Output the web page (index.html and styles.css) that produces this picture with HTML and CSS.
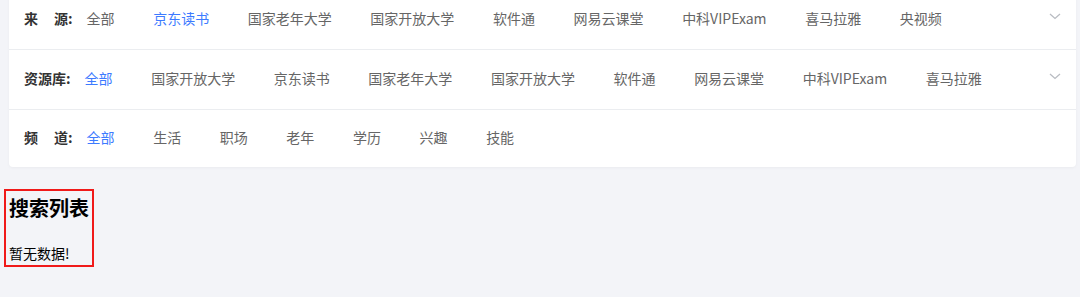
FILE: index.html
```html
<!DOCTYPE html>
<html lang="zh-CN">
<head>
    <meta charset="UTF-8" />
    <meta name="viewport" content="width=device-width, initial-scale=1.0" />
    <title>搜索列表</title>
    <link rel="stylesheet" href="styles.css">
</head>
<body>
    <div class="filter-card">
        <div class="filter-row">
            <span class="filter-label"><span class="spread">来</span>源:</span>
            <div class="filter-items">
                <a class="item">全部</a>
                <a class="item active">京东读书</a>
                <a class="item">国家老年大学</a>
                <a class="item">国家开放大学</a>
                <a class="item">软件通</a>
                <a class="item">网易云课堂</a>
                <a class="item">中科VIPExam</a>
                <a class="item">喜马拉雅</a>
                <a class="item">央视频</a>
            </div>
            <svg class="more" viewBox="0 0 12 7"><path d="M1 1l5 4.5L11 1" fill="none" stroke="#b9bcc2" stroke-width="1.3"/></svg>
        </div>
        <div class="filter-row">
            <span class="filter-label">资源库:</span>
            <div class="filter-items">
                <a class="item active">全部</a>
                <a class="item">国家开放大学</a>
                <a class="item">京东读书</a>
                <a class="item">国家老年大学</a>
                <a class="item">国家开放大学</a>
                <a class="item">软件通</a>
                <a class="item">网易云课堂</a>
                <a class="item">中科VIPExam</a>
                <a class="item">喜马拉雅</a>
            </div>
            <svg class="more" viewBox="0 0 12 7"><path d="M1 1l5 4.5L11 1" fill="none" stroke="#b9bcc2" stroke-width="1.3"/></svg>
        </div>
        <div class="filter-row">
            <span class="filter-label"><span class="spread">频</span>道:</span>
            <div class="filter-items">
                <a class="item active">全部</a>
                <a class="item">生活</a>
                <a class="item">职场</a>
                <a class="item">老年</a>
                <a class="item">学历</a>
                <a class="item">兴趣</a>
                <a class="item">技能</a>
            </div>
        </div>
    </div>

    <div class="result">
        <h3>搜索列表</h3>
        <p>暂无数据!</p>
    </div>
</body>
</html>
```

FILE: styles.css
```css
html, body {
    margin: 0;
    padding: 0;
}

body {
    background: #f3f4f8;
    font-family: "Noto Sans CJK SC", "Noto Sans", sans-serif;
    color: #333;
    overflow: hidden;
}

.filter-card {
    margin: -10px 4px 0 9px;
    background: #fff;
    border-radius: 0 0 4px 4px;
    box-shadow: 0 1px 3px rgba(0, 0, 0, 0.04);
}

.filter-row {
    position: relative;
    display: flex;
    align-items: center;
    height: 55px;
    padding: 0 15px 4px;
    border-bottom: 1px solid #ebedf0;
}

.filter-row:last-child {
    height: 53px;
    border-bottom: none;
}

.filter-label {
    font-size: 14px;
    font-weight: 700;
    color: #333;
    margin-right: 14px;
    white-space: nowrap;
}

.spread {
    margin-right: 16px;
}

.filter-items {
    display: flex;
    flex: 1;
    gap: 38.6px;
}

.item {
    font-size: 14px;
    color: #666;
    cursor: pointer;
    white-space: nowrap;
}

.item.active {
    color: #3d7bff;
}

.more {
    position: absolute;
    right: 15px;
    top: 23px;
    width: 12px;
    height: 7px;
}

.result {
    display: inline-block;
    margin: 22px 0 0 4px;
    padding: 0 3px 2px 3px;
    border: 2px solid #f01a1a;
    color: #000;
}

.result h3 {
    margin: 3px 0 0;
    font-size: 20px;
    line-height: 28px;
    font-weight: 700;
}

.result p {
    margin: 21px 0 0;
    font-size: 14px;
    line-height: 20px;
}
```
